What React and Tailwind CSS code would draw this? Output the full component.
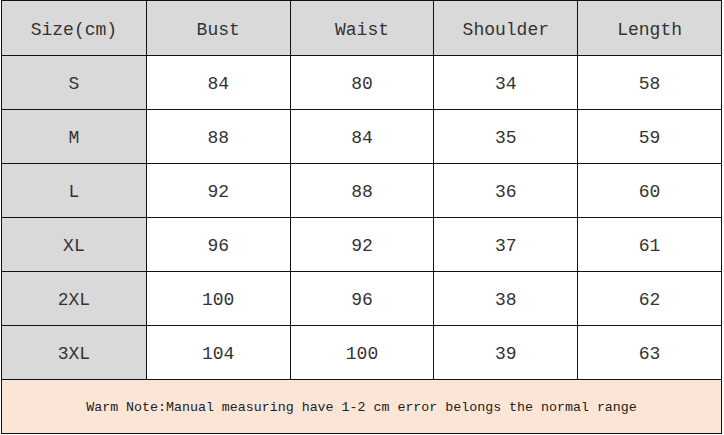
import React from "react";

const headers = ["Size(cm)", "Bust", "Waist", "Shoulder", "Length"];

const rows = [
  ["S", "84", "80", "34", "58"],
  ["M", "88", "84", "35", "59"],
  ["L", "92", "88", "36", "60"],
  ["XL", "96", "92", "37", "61"],
  ["2XL", "100", "96", "38", "62"],
  ["3XL", "104", "100", "39", "63"],
];

const Cell = ({ children, gray, first }) => (
  <div
    className={
      "w-[144px] h-full flex items-center justify-center pt-[4px] text-[18px] text-[#333] " +
      (first ? "" : "border-l-[1.5px] border-[#111] ") +
      (gray ? "bg-[#d9d9d9]" : "bg-white")
    }
  >
    {children}
  </div>
);

export default function App() {
  return (
    <div className="w-[724px] h-[435px] bg-white pl-px" style={{ fontFamily: '"Liberation Mono", "DejaVu Sans Mono", monospace' }}>
      <div className="w-[721px] border-[1.5px] border-[#111] flex flex-col">
        <div className="h-[54px] flex">
          {headers.map((h, i) => (
            <Cell key={h} gray first={i === 0}>{h}</Cell>
          ))}
        </div>
        {rows.map((r) => (
          <div key={r[0]} className="h-[54px] flex border-t-[1.5px] border-[#111]">
            {r.map((v, i) => (
              <Cell key={i} gray={i === 0} first={i === 0}>{v}</Cell>
            ))}
          </div>
        ))}
        <div className="h-[54px] flex items-center justify-center pt-[2px] border-t-[1.5px] border-[#111] bg-[#fbe5d6] text-[13.3px] text-[#222]">
          Warm Note:Manual measuring have 1-2 cm error belongs the normal range
        </div>
      </div>
    </div>
  );
}
